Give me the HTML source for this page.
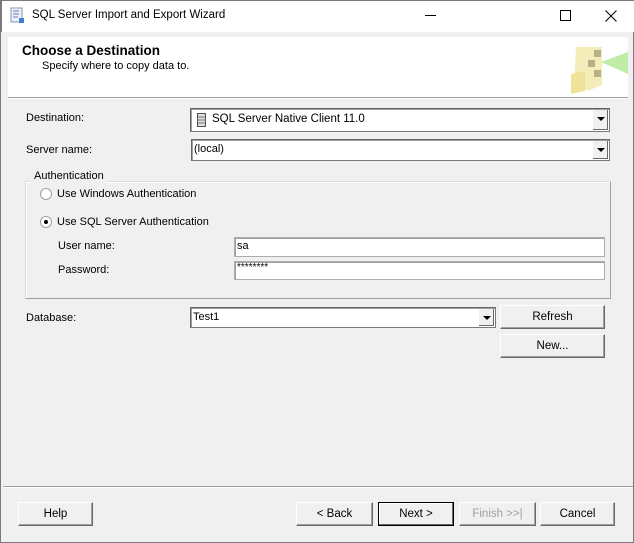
<!DOCTYPE html>
<html><head><style>
*{box-sizing:border-box;margin:0;padding:0}
body{width:634px;height:543px;background:#f0f0f0;font-family:"Liberation Sans",sans-serif;font-size:11px;color:#000;position:relative;overflow:hidden;border:1px solid #7a7a7a;border-top:none}
.a{position:absolute}
.title{left:0;top:0;width:634px;height:32px;background:#fff;border:1px solid #7a7a7a;border-bottom:none}
.hdr{left:7px;top:37px;width:620px;height:60px;background:#fff}
.line{height:1px;background:#a0a0a0}
.line2{height:1px;background:#fff}
.combo{background:#fff;border:1px solid #7a7a7a;border-top-color:#646464;border-left-color:#646464;box-shadow:inset 1px 1px 0 #a0a0a0}
.dd{position:absolute;right:1px;top:1px;bottom:1px;width:16px;background:#f0f0f0;border-left:1px solid #fff;box-shadow:inset -1px -1px 0 #696969}
.dd:after{content:"";position:absolute;left:4px;top:7px;border-left:4px solid transparent;border-right:4px solid transparent;border-top:4px solid #000}
.txt{background:#fff;border:1px solid #abadb3;box-shadow:inset 1px 1px 0 #a0a0a0}
.btn{background:#f0f0f0;border:1px solid;border-color:#fff #696969 #696969 #fff;box-shadow:inset -1px -1px 0 #a0a0a0;text-align:center;line-height:22px;font-size:11.5px}
.radio{width:12px;height:12px;border-radius:50%;background:#fff;border:1px solid #a0a0a0}
</style></head><body>
<div class="a title"></div>
<svg class="a" style="left:9px;top:7px" width="16" height="17" viewBox="0 0 16 17"><rect x="1" y="1" width="11" height="14" fill="#eef" stroke="#8a95b0"/><path d="M3 4h6M3 7h6M3 10h5" stroke="#6a7fa8"/><rect x="9" y="11" width="5" height="5" fill="#3d7fd0"/></svg>
<div class="a" style="left:31px;top:9px;font-size:11.5px">SQL Server Import and Export Wizard</div>
<div class="a" style="left:424px;top:15px;width:11px;height:1px;background:#000"></div>
<div class="a" style="left:559px;top:10px;width:11px;height:11px;border:1px solid #000"></div>
<svg class="a" style="left:604px;top:10px" width="12" height="12"><path d="M0.5 0.5L11.5 11.5M11.5 0.5L0.5 11.5" stroke="#000"/></svg>
<div class="a hdr"></div>
<div class="a" style="left:21px;top:43px;font-weight:bold;font-size:13.5px">Choose a Destination</div>
<div class="a" style="left:41px;top:60px">Specify where to copy data to.</div>
<svg class="a" style="left:565px;top:42px" width="62" height="52"><path d="M10 5h26v38l-12 5H8z" fill="#f3e9a8" opacity=".8"/><path d="M5 32l14-3v20l-14 3z" fill="#efe39a"/><rect x="22" y="18" width="7" height="7" fill="#b8b08a"/><rect x="28" y="8" width="7" height="7" fill="#b8b08a"/><rect x="28" y="28" width="7" height="7" fill="#b8b08a"/><path d="M35 20l27-10v22z" fill="#b0e890" opacity=".8"/></svg>
<div class="a line" style="left:7px;top:97px;width:620px"></div>
<div class="a line2" style="left:7px;top:98px;width:620px"></div>

<div class="a" style="left:25px;top:112px">Destination:</div>
<div class="a combo" style="left:189px;top:108px;width:420px;height:24px"><div class="dd"></div>
<svg class="a" style="left:6px;top:4px" width="9" height="14"><rect x="0.5" y="0.5" width="8" height="13" fill="#ddd" stroke="#555"/><path d="M1 4h7M1 7h7M1 10h7" stroke="#777"/></svg>
<span class="a" style="left:21px;top:4px;font-size:11.5px">SQL Server Native Client 11.0</span></div>
<div class="a" style="left:25px;top:144px">Server name:</div>
<div class="a combo" style="left:190px;top:139px;width:419px;height:22px"><div class="dd"></div><span class="a" style="left:2px;top:3px">(local)</span></div>

<div class="a" style="left:24px;top:181px;width:586px;height:118px;border:1px solid #dcdcdc;border-color:#dcdcdc #a0a0a0 #a0a0a0 #dcdcdc;box-shadow:inset 1px 1px 0 #fff"></div>
<div class="a" style="left:30px;top:169px;background:#f0f0f0;padding:0 3px;line-height:14px">Authentication</div>
<div class="a radio" style="left:39px;top:188px"></div>
<div class="a" style="left:56px;top:188px">Use Windows Authentication</div>
<div class="a radio" style="left:39px;top:216px"><div style="position:absolute;left:3px;top:3px;width:4px;height:4px;border-radius:50%;background:#000"></div></div>
<div class="a" style="left:56px;top:216px">Use SQL Server Authentication</div>
<div class="a" style="left:57px;top:240px">User name:</div>
<div class="a txt" style="left:233px;top:237px;width:371px;height:20px"><span class="a" style="left:2px;top:2px">sa</span></div>
<div class="a" style="left:57px;top:264px">Password:</div>
<div class="a txt" style="left:233px;top:261px;width:371px;height:19px"><span class="a" style="left:2px;top:0px;font-size:10px">********</span></div>

<div class="a" style="left:25px;top:312px">Database:</div>
<div class="a combo" style="left:189px;top:307px;width:306px;height:21px"><div class="dd"></div><span class="a" style="left:2px;top:3px">Test1</span></div>
<div class="a btn" style="left:499px;top:305px;width:105px;height:24px">Refresh</div>
<div class="a btn" style="left:499px;top:334px;width:105px;height:24px">New...</div>

<div class="a line" style="left:2px;top:486px;width:630px"></div>
<div class="a line2" style="left:2px;top:487px;width:630px"></div>
<div class="a btn" style="left:17px;top:502px;width:75px;height:24px">Help</div>
<div class="a btn" style="left:295px;top:502px;width:77px;height:24px">&lt; Back</div>
<div class="a btn" style="left:377px;top:502px;width:76px;height:24px;border:1px solid #000;box-shadow:inset -1px -1px 0 #696969,inset 1px 1px 0 #fff">Next &gt;</div>
<div class="a btn" style="left:458px;top:502px;width:77px;height:24px;color:#a0a0a0">Finish &gt;&gt;|</div>
<div class="a btn" style="left:539px;top:502px;width:75px;height:24px">Cancel</div>
</body></html>
